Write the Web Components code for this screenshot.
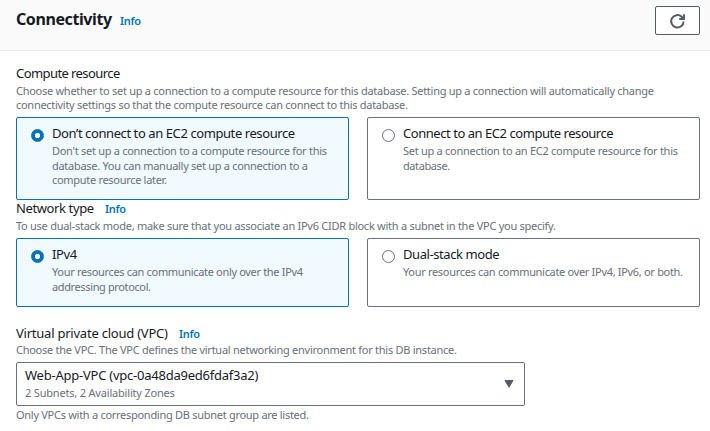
<!DOCTYPE html>
<html lang="en">
<head>
<meta charset="utf-8">
<title>Connectivity</title>
<style>
body{margin:0;background:#fff;font-family:"Noto Sans","Open Sans",sans-serif;color:#16191f}
</style>
</head>
<body>
<connectivity-panel></connectivity-panel>
<script>
const define = (name, html, setup) => {
  const t = document.createElement('template');
  t.innerHTML = html;
  customElements.define(name, class extends HTMLElement {
    connectedCallback() {
      if (this.shadowRoot) return;
      this.attachShadow({mode: 'open'}).append(t.content.cloneNode(true));
      if (setup) setup(this, this.shadowRoot);
    }
  });
};

/* One line of text, tracked so that it spans the width given in "w". */
define('text-line', `<style>
:host{display:block;white-space:nowrap;font-size:11px;line-height:14px;color:#687078;height:14px}
:host([kind=label]){font-size:13px;line-height:18px;height:18px;color:#16191f}
:host([kind=heading]){font-size:16px;line-height:22px;height:22px;font-weight:700;color:#16191f}
:host([kind=info]){font-size:11px;line-height:14px;font-weight:600;color:#0073bb}
span{display:inline-block}
</style><span><slot></slot></span>`, (el, root) => {
  const span = root.querySelector('span');
  const n = el.textContent.length;
  const w = +el.getAttribute('w');
  if (w) span.style.letterSpacing = ((w - .3 - span.getBoundingClientRect().width) / n) + 'px';
});

define('refresh-button', `<style>
:host{display:flex;box-sizing:border-box;width:45px;height:29px;border:1px solid #545b64;border-radius:2px;background:#fff;align-items:center;justify-content:center}
svg{display:block;width:16px;height:16px}
</style><svg viewBox="0 0 16 16" fill="none" stroke="#545b64" stroke-width="2"><path d="M13.6 8.4A6.2 6.2 0 1 1 11.6 3.7L13.2 5.2"/><path d="M13.9 1.2v4.9H9.2"/></svg>`);

define('radio-mark', `<style>
:host{display:block;box-sizing:border-box;width:13px;height:13px;border:1px solid #687078;border-radius:50%;background:#fff}
:host([checked]){border-color:#0073bb;background:radial-gradient(circle,#fff 2.2px,#0073bb 3px)}
</style>`);

define('option-tile', `<style>
:host{display:flex;box-sizing:border-box;border:1px solid #687078;border-radius:2px;padding:6px 14px 0;gap:8px;background:#fff}
:host([checked]){border-color:#0073bb;background:#f1faff}
radio-mark{margin-top:5px;flex:none}
.body{display:flex;flex-direction:column}
.text{margin-top:2px;display:grid;grid-auto-rows:14.5px}
</style><radio-mark></radio-mark><div class="body"><slot name="title"></slot><div class="text"><slot></slot></div></div>`,
(el, root) => { if (el.hasAttribute('checked')) root.querySelector('radio-mark').setAttribute('checked', ''); });

define('option-row', `<style>
:host{display:grid;grid-template-columns:333px 333px;gap:18px}
</style><slot></slot>`);

define('field-title', `<style>
:host{display:flex;align-items:baseline;height:18px}
::slotted([kind=info]){margin-left:11.4px}
</style><slot></slot>`);

define('select-box', `<style>
:host{display:flex;box-sizing:border-box;width:509px;height:44px;border:1px solid #687078;border-radius:2px;padding:3px 10px 0 8px;justify-content:space-between;background:#fff}
.value{display:flex;flex-direction:column;gap:0}
svg{display:block;margin-top:14px;width:10px;height:8px}
</style><div class="value"><slot></slot></div><svg viewBox="0 0 10 8"><path d="M1 .5h8L5 7.2z" fill="#545b64" stroke="#545b64" stroke-linejoin="round"/></svg>`);

define('panel-header', `<style>
:host{display:flex;box-sizing:border-box;height:51px;background:#fafafa;border-bottom:1px solid #eaeded;padding:6px 10px 0 16px;justify-content:space-between}
.title{display:flex;align-items:baseline;gap:8.4px;height:26px;padding-top:2px}
</style><div class="title"><slot></slot></div><refresh-button></refresh-button>`);

define('connectivity-panel', `<style>
:host{display:block;width:710px;height:431px;overflow:hidden}
main{padding:13px 0 0 16px}
.compute{height:83px;margin-top:5px}
.network{height:69px;margin-top:5px}
.vpc{margin-top:17px}
.tight{margin-top:-1px}
select-box{margin:5px 0 2px}
</style>
<panel-header><text-line kind="heading" w="96">Connectivity</text-line><text-line kind="info" w="21">Info</text-line></panel-header>
<main>
<field-title><text-line kind="label" w="104">Compute resource</text-line></field-title>
<text-line style="margin-top:2px" w="638">Choose whether to set up a connection to a compute resource for this database. Setting up a connection will automatically change</text-line>
<text-line w="392">connectivity settings so that the compute resource can connect to this database.</text-line>
<option-row class="compute">
<option-tile checked><text-line slot="title" kind="label" w="243">Don’t connect to an EC2 compute resource</text-line><text-line w="275">Don't set up a connection to a compute resource for this</text-line><text-line w="256">database. You can manually set up a connection to a</text-line><text-line w="115">compute resource later.</text-line></option-tile>
<option-tile><text-line slot="title" kind="label" w="210.5">Connect to an EC2 compute resource</text-line><text-line w="275">Set up a connection to an EC2 compute resource for this</text-line><text-line w="47">database.</text-line></option-tile>
</option-row>
<field-title class="tight"><text-line kind="label" w="78">Network type</text-line><text-line kind="info" w="21">Info</text-line></field-title>
<text-line style="margin-top:2px" w="540">To use dual-stack mode, make sure that you associate an IPv6 CIDR block with a subnet in the VPC you specify.</text-line>
<option-row class="network">
<option-tile checked><text-line slot="title" kind="label" w="25">IPv4</text-line><text-line w="251">Your resources can communicate only over the IPv4</text-line><text-line w="99">addressing protocol.</text-line></option-tile>
<option-tile><text-line slot="title" kind="label" w="96.5">Dual-stack mode</text-line><text-line w="280">Your resources can communicate over IPv4, IPv6, or both.</text-line></option-tile>
</option-row>
<field-title class="vpc"><text-line kind="label" w="152">Virtual private cloud (VPC)</text-line><text-line kind="info" w="21">Info</text-line></field-title>
<text-line style="margin-top:1px" w="441">Choose the VPC. The VPC defines the virtual networking environment for this DB instance.</text-line>
<select-box><text-line kind="label" w="233.5">Web-App-VPC (vpc-0a48da9ed6fdaf3a2)</text-line><text-line style="margin-top:2px" w="150">2 Subnets, 2 Availability Zones</text-line></select-box>
<text-line w="293">Only VPCs with a corresponding DB subnet group are listed.</text-line>
</main>`);
</script>
</body>
</html>
